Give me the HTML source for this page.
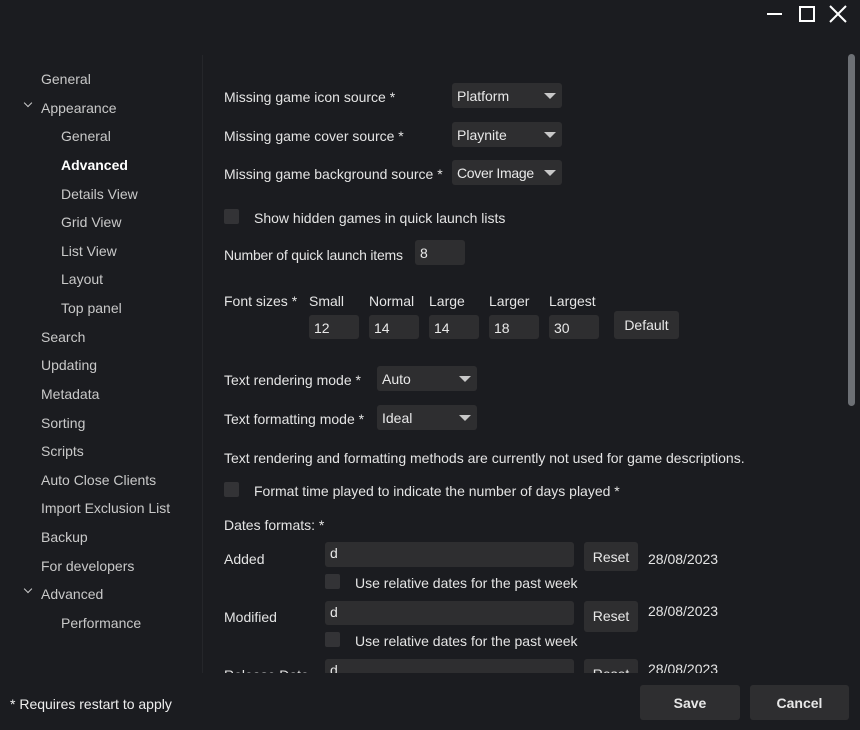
<!DOCTYPE html>
<html><head><meta charset="utf-8"><style>
*{margin:0;padding:0;box-sizing:border-box}
body{width:860px;height:730px;background:#1b1c20;font-family:"Liberation Sans",sans-serif;font-size:14px;color:#e4e4e4;position:relative;overflow:hidden}
.t{position:absolute;line-height:20px;white-space:nowrap}
.s{color:#c9c9c9}
.dd{position:absolute;background:#2e2e30;border-radius:3px;line-height:26px;padding-left:5px;color:#e8e8e8}
.dd:after{content:"";position:absolute;right:6px;top:10px;border-left:6px solid transparent;border-right:6px solid transparent;border-top:6px solid #c8c8c8}
.in{position:absolute;background:#2e2e30;border-radius:3px;line-height:22px;padding-left:5px;color:#e8e8e8}
.cb{position:absolute;width:15px;height:15px;background:#333336;border-radius:2px}
.btn{position:absolute;background:#2e2e30;border-radius:3px;text-align:center;color:#e8e8e8}
.chev{position:absolute;width:6px;height:6px;border-right:1.3px solid #c9c9c9;border-bottom:1.3px solid #c9c9c9;transform:rotate(45deg)}
</style></head><body>
<div style="position:absolute;left:767px;top:13px;width:15px;height:2px;background:#fff"></div>
<div style="position:absolute;left:799px;top:6px;width:16px;height:16px;border:2px solid #fff"></div>
<svg style="position:absolute;left:829px;top:5px" width="18" height="18"><path d="M1 1L17 17M17 1L1 17" stroke="#fff" stroke-width="2"/></svg>
<div style="position:absolute;left:202px;top:55px;width:1px;height:618px;background:#25262a"></div>
<div style="position:absolute;left:848px;top:54px;width:7px;height:352px;background:#6d7075;border-radius:4px"></div>
<div class="t s" style="left:41px;top:69px">General</div>
<div class="chev" style="left:25px;top:100px"></div>
<div class="t s" style="left:41px;top:98px">Appearance</div>
<div class="t s" style="left:61px;top:126px">General</div>
<div class="t" style="left:61px;top:155px;font-weight:bold;color:#fff">Advanced</div>
<div class="t s" style="left:61px;top:184px">Details View</div>
<div class="t s" style="left:61px;top:212px">Grid View</div>
<div class="t s" style="left:61px;top:241px">List View</div>
<div class="t s" style="left:61px;top:269px">Layout</div>
<div class="t s" style="left:61px;top:298px">Top panel</div>
<div class="t s" style="left:41px;top:327px">Search</div>
<div class="t s" style="left:41px;top:355px">Updating</div>
<div class="t s" style="left:41px;top:384px">Metadata</div>
<div class="t s" style="left:41px;top:413px">Sorting</div>
<div class="t s" style="left:41px;top:441px">Scripts</div>
<div class="t s" style="left:41px;top:470px">Auto Close Clients</div>
<div class="t s" style="left:41px;top:498px">Import Exclusion List</div>
<div class="t s" style="left:41px;top:527px">Backup</div>
<div class="t s" style="left:41px;top:556px">For developers</div>
<div class="chev" style="left:25px;top:586px"></div>
<div class="t s" style="left:41px;top:584px">Advanced</div>
<div class="t s" style="left:61px;top:613px">Performance</div>
<div style="position:absolute;left:0;top:0;width:860px;height:673px;overflow:hidden">
<div class="t" style="left:224px;top:87px">Missing game icon source *</div>
<div class="dd" style="left:452px;top:83px;width:110px;height:25px">Platform</div>
<div class="t" style="left:224px;top:126px">Missing game cover source *</div>
<div class="dd" style="left:452px;top:122px;width:110px;height:25px">Playnite</div>
<div class="t" style="left:224px;top:164px">Missing game background source *</div>
<div class="dd" style="left:452px;top:160px;width:110px;height:25px;letter-spacing:-0.3px">Cover Image</div>
<div class="cb" style="left:224px;top:209px"></div>
<div class="t" style="left:254px;top:208px">Show hidden games in quick launch lists</div>
<div class="t" style="left:224px;top:245px;letter-spacing:-0.2px">Number of quick launch items</div>
<div class="in" style="left:415px;top:240px;width:50px;height:25px;line-height:27px">8</div>
<div class="t" style="left:224px;top:291px">Font sizes *</div>
<div class="t" style="left:309px;top:291px">Small</div>
<div class="t" style="left:369px;top:291px">Normal</div>
<div class="t" style="left:429px;top:291px">Large</div>
<div class="t" style="left:489px;top:291px">Larger</div>
<div class="t" style="left:549px;top:291px">Largest</div>
<div class="in" style="left:309px;top:315px;width:50px;height:24px;line-height:27px">12</div>
<div class="in" style="left:369px;top:315px;width:50px;height:24px;line-height:27px">14</div>
<div class="in" style="left:429px;top:315px;width:50px;height:24px;line-height:27px">14</div>
<div class="in" style="left:489px;top:315px;width:50px;height:24px;line-height:27px">18</div>
<div class="in" style="left:549px;top:315px;width:50px;height:24px;line-height:27px">30</div>
<div class="btn" style="left:614px;top:311px;width:65px;height:28px;line-height:29px">Default</div>
<div class="t" style="left:224px;top:370px">Text rendering mode *</div>
<div class="dd" style="left:377px;top:366px;width:100px;height:25px">Auto</div>
<div class="t" style="left:224px;top:409px">Text formatting mode *</div>
<div class="dd" style="left:377px;top:405px;width:100px;height:25px">Ideal</div>
<div class="t" style="left:224px;top:448px">Text rendering and formatting methods are currently not used for game descriptions.</div>
<div class="cb" style="left:224px;top:482px"></div>
<div class="t" style="left:254px;top:481px">Format time played to indicate the number of days played *</div>
<div class="t" style="left:224px;top:515px">Dates formats: *</div>
<div class="t" style="left:224px;top:549px">Added</div>
<div class="in" style="left:325px;top:542px;width:249px;height:25px">d</div>
<div class="btn" style="left:584px;top:542px;width:54px;height:29px;line-height:31px">Reset</div>
<div class="t" style="left:648px;top:549px">28/08/2023</div>
<div class="cb" style="left:325px;top:574px"></div>
<div class="t" style="left:355px;top:573px">Use relative dates for the past week</div>
<div class="t" style="left:224px;top:607px">Modified</div>
<div class="in" style="left:325px;top:601px;width:249px;height:24px">d</div>
<div class="btn" style="left:584px;top:601px;width:54px;height:31px;line-height:31px">Reset</div>
<div class="t" style="left:648px;top:601px">28/08/2023</div>
<div class="cb" style="left:325px;top:632px"></div>
<div class="t" style="left:355px;top:631px">Use relative dates for the past week</div>
<div class="t" style="left:224px;top:665px">Release Date</div>
<div class="in" style="left:325px;top:659px;width:249px;height:25px">d</div>
<div class="btn" style="left:584px;top:659px;width:54px;height:31px;line-height:31px">Reset</div>
<div class="t" style="left:648px;top:659px">28/08/2023</div>
</div>
<div class="t" style="left:10px;top:694px;color:#eee">* Requires restart to apply</div>
<div class="btn" style="left:640px;top:685px;width:100px;height:35px;line-height:36px;font-weight:bold">Save</div>
<div class="btn" style="left:750px;top:685px;width:99px;height:35px;line-height:36px;font-weight:bold">Cancel</div>
</body></html>
